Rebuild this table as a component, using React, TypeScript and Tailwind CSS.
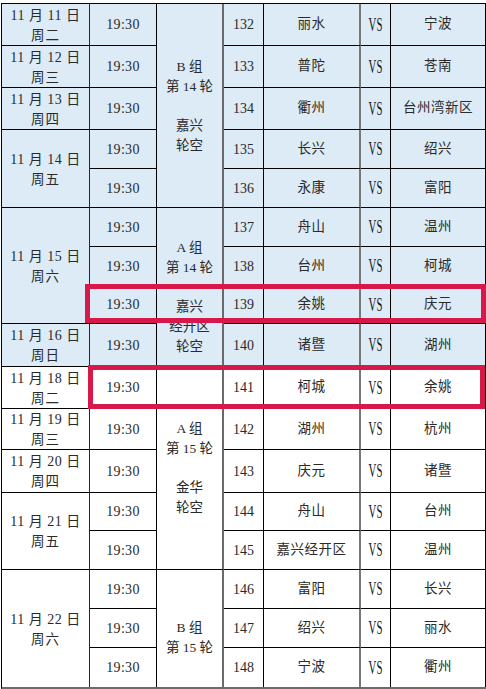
import React from "react";

type DateCell = { r: number; span: number; l1: string; l2: string };
type GroupCell = { r: number; span: number; lines: string[]; pt: string };

const dates: DateCell[] = [
  { r: 1, span: 1, l1: "11 月 11 日", l2: "周二" },
  { r: 2, span: 1, l1: "11 月 12 日", l2: "周三" },
  { r: 3, span: 1, l1: "11 月 13 日", l2: "周四" },
  { r: 4, span: 2, l1: "11 月 14 日", l2: "周五" },
  { r: 6, span: 3, l1: "11 月 15 日", l2: "周六" },
  { r: 9, span: 1, l1: "11 月 16 日", l2: "周日" },
  { r: 10, span: 1, l1: "11 月 18 日", l2: "周二" },
  { r: 11, span: 1, l1: "11 月 19 日", l2: "周三" },
  { r: 12, span: 1, l1: "11 月 20 日", l2: "周四" },
  { r: 13, span: 2, l1: "11 月 21 日", l2: "周五" },
  { r: 15, span: 3, l1: "11 月 22 日", l2: "周六" },
];

const groups: GroupCell[] = [
  { r: 1, span: 5, lines: ["B 组", "第 14 轮", "", "嘉兴", "轮空"], pt: "pt-[53px]" },
  { r: 6, span: 4, lines: ["A 组", "第 14 轮", "", "嘉兴", "经开区", "轮空"], pt: "pt-[30px]" },
  { r: 10, span: 1, lines: [], pt: "pt-0" },
  { r: 11, span: 4, lines: ["A 组", "第 15 轮", "", "金华", "轮空"], pt: "pt-[10px]" },
  { r: 15, span: 3, lines: ["B 组", "第 15 轮"], pt: "pt-[48px]" },
];

const matches: [string, string][] = [
  ["丽水", "宁波"],
  ["普陀", "苍南"],
  ["衢州", "台州湾新区"],
  ["长兴", "绍兴"],
  ["永康", "富阳"],
  ["舟山", "温州"],
  ["台州", "柯城"],
  ["余姚", "庆元"],
  ["诸暨", "湖州"],
  ["柯城", "余姚"],
  ["湖州", "杭州"],
  ["庆元", "诸暨"],
  ["舟山", "台州"],
  ["嘉兴经开区", "温州"],
  ["富阳", "长兴"],
  ["绍兴", "丽水"],
  ["宁波", "衢州"],
];

const colBorder = [
  "border-r border-r-[#2a2a2a]",
  "border-r border-r-black",
  "border-r-2 border-r-[#6a6a6a]",
  "border-r border-r-black",
  "border-r-2 border-r-[#777777]",
  "border-r border-r-black",
  "border-r border-r-black",
];

const colStart = [
  "col-start-1",
  "col-start-2",
  "col-start-3",
  "col-start-4",
  "col-start-5",
  "col-start-6",
  "col-start-7",
];

const rowStart = [
  "",
  "row-start-1",
  "row-start-2",
  "row-start-3",
  "row-start-4",
  "row-start-5",
  "row-start-6",
  "row-start-7",
  "row-start-8",
  "row-start-9",
  "row-start-10",
  "row-start-11",
  "row-start-12",
  "row-start-13",
  "row-start-14",
  "row-start-15",
  "row-start-16",
  "row-start-17",
];

const rowSpan = ["", "row-span-1", "row-span-2", "row-span-3", "row-span-4", "row-span-5"];

function bg(r: number) {
  return r <= 9 ? "bg-[#ddebf7]" : "bg-white";
}

function bottom(rEnd: number) {
  return rEnd >= 17 ? "border-b-0" : "border-b border-b-black";
}

function place(c: number, r: number, span: number) {
  return `${colStart[c]} ${rowStart[r]} ${rowSpan[span]} ${colBorder[c]} ${bottom(r + span - 1)} ${bg(r)}`;
}

export default function App() {
  return (
    <div className="relative w-[486px] h-[689px] bg-white text-[#2a2a2a] overflow-hidden font-['Liberation_Serif','Noto_Sans_CJK_SC',serif]">
      <div className="ml-[1px] mt-[3px] w-[485px] grid grid-cols-[88px_67px_67px_40px_97px_30px_95px] grid-rows-[42px_42px_42px_39px_39px_39px_39px_38px_43px_42px_41px_43px_38px_39px_39px_39px_39px] border-t border-l border-t-black border-l-black border-b-[3px] border-b-[#6b6b6b]">
        {dates.map((d) => (
          <div
            key={"d" + d.r}
            className={`${place(0, d.r, d.span)} flex flex-col items-center justify-center pt-[2px] text-[14px] leading-[20px]`}
          >
            <div className="tracking-[0.5px]">{d.l1}</div>
            <div className="text-[13.5px] tracking-[1px]">{d.l2}</div>
          </div>
        ))}
        {matches.map((m, i) => {
          const r = i + 1;
          return (
            <React.Fragment key={"m" + r}>
              <div className={`${place(1, r, 1)} flex items-center justify-center text-[14px] tracking-[0.3px]`}>
                19:30
              </div>
              <div className={`${place(3, r, 1)} flex items-center justify-center text-[14px]`}>
                {131 + r}
              </div>
              <div className={`${place(4, r, 1)} flex items-center justify-center text-[13.5px] tracking-[0.5px]`}>
                {m[0]}
              </div>
              <div className={`${place(5, r, 1)} flex items-center justify-center`}>
                <span className="inline-block text-[18px] leading-none scale-x-[0.6] font-medium text-[#151515]">VS</span>
              </div>
              <div className={`${place(6, r, 1)} flex items-center justify-center text-[13.5px] tracking-[0.5px]`}>
                {m[1]}
              </div>
            </React.Fragment>
          );
        })}
        {groups.map((g) => (
          <div
            key={"g" + g.r}
            className={`${place(2, g.r, g.span)} ${g.pt} flex flex-col items-center text-[13.5px] leading-[19.75px]`}
          >
            {g.lines.map((l, i) => (
              <div key={i} className="h-[19.75px] whitespace-nowrap">
                {l}
              </div>
            ))}
          </div>
        ))}
      </div>
      <div className="absolute left-[85px] top-[284px] w-[401px] h-[39px] border-[5px] border-[#d6184a]" />
      <div className="absolute left-[88px] top-[365px] w-[397px] h-[44px] border-[5px] border-[#d6184a]" />
    </div>
  );
}
